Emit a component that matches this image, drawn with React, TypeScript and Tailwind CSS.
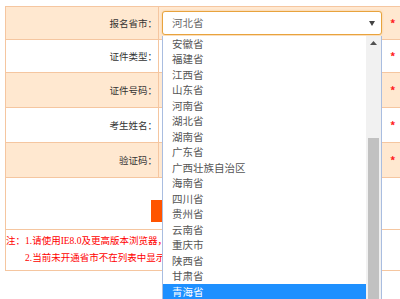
import React from "react";

const provinces = [
  "安徽省",
  "福建省",
  "江西省",
  "山东省",
  "河南省",
  "湖北省",
  "湖南省",
  "广东省",
  "广西壮族自治区",
  "海南省",
  "四川省",
  "贵州省",
  "云南省",
  "重庆市",
  "陕西省",
  "甘肃省",
  "青海省",
];

const cjk = { fontFamily: '"Noto Sans CJK SC", "Noto Sans", sans-serif' };
const noteFont = { fontFamily: '"Liberation Serif", "Noto Sans CJK SC", serif' };

function Row({
  label,
  peach,
  h,
  children,
}: {
  label: string;
  peach: boolean;
  h: string;
  children?: React.ReactNode;
}) {
  return (
    <div className={`flex ${h} border-b border-[#f5c6a0] ${peach ? "bg-[#ffe8d0]" : "bg-white"}`}>
      <div className="w-[153px] shrink-0 border-r border-[#f5c6a0] flex items-center justify-end pr-[1px] text-[9.5px] text-[#333]">
        {label}
      </div>
      <div className="flex-1 flex items-center pl-[3px]">{children}</div>
    </div>
  );
}

function Star({ ml }: { ml: string }) {
  return <span className={`${ml} text-[11px] font-bold leading-none text-[#ff2020]`}>*</span>;
}

export default function App() {
  return (
    <div className="relative w-[400px] h-[299px] overflow-hidden bg-white" style={cjk}>
      <div className="pt-[6px] pl-[5px]">
        <div className="w-[430px] border-t border-l border-[#f5c6a0]">
          <Row label="报名省市：" peach h="h-[33px]">
            <div className="w-[220px] h-[24px] border border-[#e8a33d] rounded-[3px] bg-white flex items-center justify-between pl-[9px] pr-[6px] shadow-[0_0_2px_rgba(232,163,61,0.5)]">
              <span className="text-[10.5px] text-[#666]">河北省</span>
              <svg width="6" height="5" viewBox="0 0 6 5">
                <path d="M0 0 L6 0 L3 5 Z" fill="#444" />
              </svg>
            </div>
            <Star ml="ml-[8px]" />
          </Row>
          <Row label="证件类型：" peach={false} h="h-[33px]">
            <div className="w-[220px]" />
            <Star ml="ml-[8px]" />
          </Row>
          <Row label="证件号码：" peach h="h-[35px]">
            <div className="w-[220px]" />
            <Star ml="ml-[8px]" />
          </Row>
          <Row label="考生姓名：" peach={false} h="h-[35px]">
            <div className="w-[220px]" />
            <Star ml="ml-[8px]" />
          </Row>
          <Row label="验证码：" peach h="h-[35px]">
            <div className="w-[220px]" />
            <Star ml="ml-[8px]" />
          </Row>
          <div className="h-[52px] border-b border-[#f5c6a0] pt-[22px] pl-[145px]">
            <div className="w-[100px] h-[22px] bg-[#ff5400]" />
          </div>
          <div className="h-[41px] border-b border-[#f5c6a0] pt-[3px] text-[9.5px] text-[#ff0000]" style={noteFont}>
            <div className="h-[17px] leading-[17px] pl-[0px]">注：1.请使用IE8.0及更高版本浏览器，</div>
            <div className="h-[17px] leading-[17px] pl-[19px]">2.当前未开通省市不在列表中显示。</div>
          </div>
        </div>
      </div>

      {/* dropdown list overlay */}
      <div className="absolute left-[162px] top-[36px] w-[220px] h-[280px] bg-white border-l border-r border-[#a9bde0] flex">
        <div className="flex-1">
          {provinces.map((p) => {
            const sel = p === "青海省";
            return (
              <div
                key={p}
                className={`h-[15.5px] flex items-center pl-[9px] text-[10.5px] ${
                  sel ? "bg-[#1e90ff] text-white" : "text-[#555]"
                }`}
              >
                {p}
              </div>
            );
          })}
        </div>
        <div className="w-[15px] shrink-0 bg-[#f1f1f1] flex flex-col items-center">
          <div className="h-[14px] flex items-center justify-center">
            <svg width="7" height="4" viewBox="0 0 7 4">
              <path d="M0 4 L3.5 0 L7 4 Z" fill="#505050" />
            </svg>
          </div>
          <div className="mt-[88px] w-[11px] flex-1 bg-[#c1c1c1]" />
        </div>
      </div>
    </div>
  );
}
